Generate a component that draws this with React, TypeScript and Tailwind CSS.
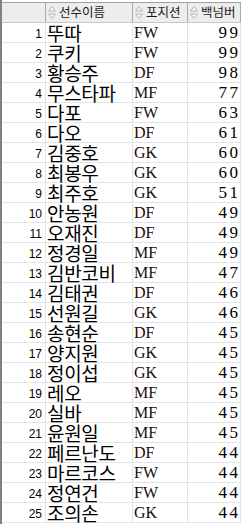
import React from "react";

const rows: [string, string, number][] = [
  ["뚜따", "FW", 99],
  ["쿠키", "FW", 99],
  ["황승주", "DF", 98],
  ["무스타파", "MF", 77],
  ["다포", "FW", 63],
  ["다오", "DF", 61],
  ["김중호", "GK", 60],
  ["최봉우", "GK", 60],
  ["최주호", "GK", 51],
  ["안농원", "DF", 49],
  ["오재진", "DF", 49],
  ["정경일", "MF", 49],
  ["김반코비", "MF", 47],
  ["김태권", "DF", 46],
  ["선원길", "GK", 46],
  ["송현순", "DF", 45],
  ["양지원", "GK", 45],
  ["정이섭", "GK", 45],
  ["레오", "MF", 45],
  ["실바", "MF", 45],
  ["윤원일", "MF", 45],
  ["페르난도", "DF", 44],
  ["마르코스", "FW", 44],
  ["정연건", "FW", 44],
  ["조의손", "GK", 44],
];

function SortIcon() {
  return (
    <svg width="8" height="13" viewBox="0 0 8 13" className="shrink-0">
      <path d="M4 0.5 L7.5 5 L0.5 5 Z" fill="#f4f4f4" stroke="#b8b8b8" strokeWidth="1" />
      <path d="M4 12.5 L7.5 8 L0.5 8 Z" fill="#f4f4f4" stroke="#b8b8b8" strokeWidth="1" />
    </svg>
  );
}

const hdrFont = { fontFamily: '"Noto Sans CJK KR", "Noto Sans", sans-serif' };

export default function App() {
  return (
    <div className="flex w-[247px] h-[524px] bg-white overflow-hidden">
      <div className="w-[2px] h-full bg-[#808080] shrink-0" />
      <div className="flex flex-col w-[239px] shrink-0">
        <div className="h-[2px] bg-white" />
        {/* header */}
        <div className="flex h-[21px] bg-[#ededed] border-t border-b border-t-[#a0a0a0] border-b-[#c8c8c8] text-[12.5px] text-[#1a1a1a]" style={hdrFont}>
          <div className="w-[44px] border-r border-[#a8a8a8]" />
          <div className="w-[87px] border-r border-[#a8a8a8] flex items-center pl-[2px] gap-[3px] leading-none">
            <SortIcon />
            <span>선수이름</span>
          </div>
          <div className="w-[55px] border-r border-[#a8a8a8] flex items-center pl-[2px] gap-[3px] leading-none">
            <SortIcon />
            <span>포지션</span>
          </div>
          <div className="w-[53px] border-r border-[#a8a8a8] flex items-center pl-[2px] gap-[3px] leading-none">
            <SortIcon />
            <span>백넘버</span>
          </div>
        </div>
        {/* rows */}
        {rows.map(([name, pos, num], i) => (
          <div key={i} className="flex h-[20px] border-b border-[#e4e4e4] text-black">
            <div
              className="w-[44px] border-r border-[#e4e4e4] flex items-center justify-end pr-[3px] pt-[2px] text-[12px] leading-none"
              style={{ fontFamily: '"Liberation Sans", sans-serif' }}
            >
              {i + 1}
            </div>
            <div
              className="w-[87px] border-r border-[#e4e4e4] flex items-center pl-[1px] text-[19px] leading-[18px] whitespace-nowrap overflow-visible relative z-10"
              style={{ fontFamily: '"Noto Sans CJK KR", sans-serif', letterSpacing: "-0.3px" }}
            >
              {name}
            </div>
            <div
              className="w-[55px] border-r border-[#e4e4e4] flex items-center pl-[1px] text-[16px] leading-none text-[#1a0d0d]"
              style={{ fontFamily: '"Liberation Serif", serif' }}
            >
              {pos}
            </div>
            <div
              className="w-[53px] border-r border-[#e4e4e4] flex items-center justify-end pr-[2px] text-[17px] leading-none tracking-[2.5px]"
              style={{ fontFamily: '"Liberation Serif", serif' }}
            >
              <span className="mr-[-2.5px]">{num}</span>
            </div>
          </div>
        ))}
      </div>
    </div>
  );
}
